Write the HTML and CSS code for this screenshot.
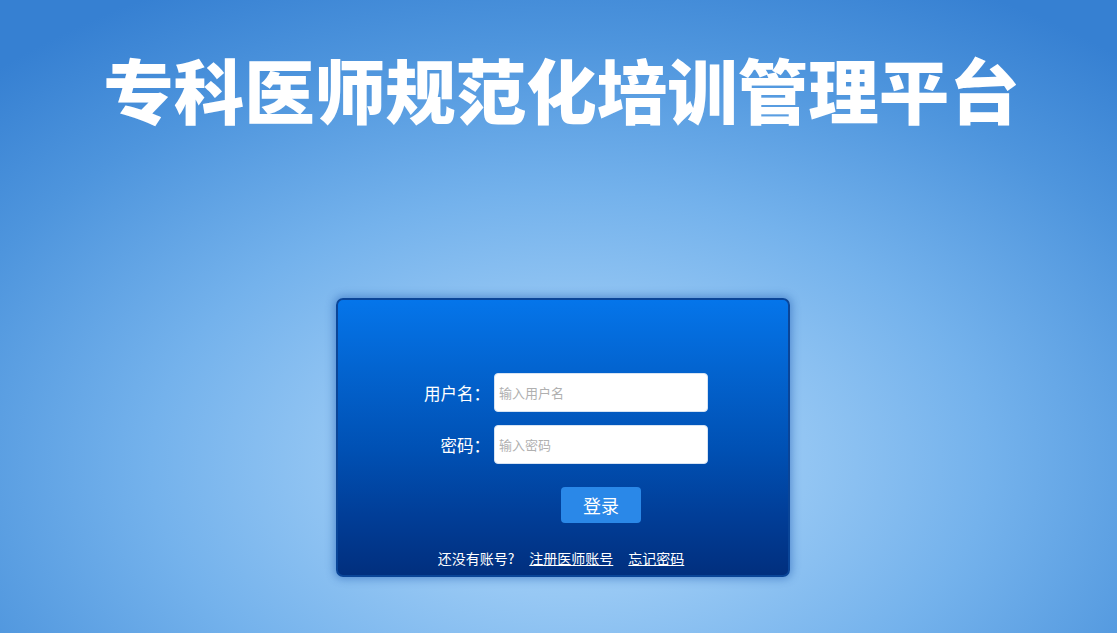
FILE: index.html
```html
<!DOCTYPE html>
<html lang="zh-CN">
<head>
<meta charset="utf-8">
<title>专科医师规范化培训管理平台</title>
<link rel="stylesheet" href="styles.css">
</head>
<body>
<div class="page">
  <h1 class="title">专科医师规范化培训管理平台</h1>
  <div class="card">
    <form class="form">
      <div class="row">
        <label class="label">用户名：</label>
        <input class="input" type="text" placeholder="输入用户名">
      </div>
      <div class="row">
        <label class="label">密码：</label>
        <input class="input" type="password" placeholder="输入密码">
      </div>
      <div class="btn-row">
        <button class="btn" type="button">登录</button>
      </div>
    </form>
    <div class="links">
      <span>还没有账号?</span>
      <a class="link" href="#">注册医师账号</a>
      <a class="link" href="#">忘记密码</a>
    </div>
  </div>
</div>
</body>
</html>
```

FILE: styles.css
```css
html, body {
  margin: 0;
  padding: 0;
  height: 100%;
}
body {
  font-family: "Noto Sans CJK SC", "Noto Sans", sans-serif;
  background: radial-gradient(ellipse 75% 85% at 51% 73%, #acd6f8 0%, #97c8f4 25%, #74b2ec 50%, #4e95dd 78%, #3680d2 100%);
  overflow: hidden;
}
.page {
  height: 633px;
  display: flex;
  flex-direction: column;
  align-items: center;
}
.title {
  margin: 49px 0 0 0;
  font-size: 70.5px;
  line-height: 78px;
  font-weight: 900;
  letter-spacing: 0;
  color: #ffffff;
  padding-left: 6px;
}
.card {
  margin-top: 171px;
  margin-left: 9px;
  width: 450px;
  height: 275px;
  border: 2px solid #0a4598;
  border-radius: 7px;
  background: linear-gradient(to bottom, #0575ea 0%, #0364d0 25%, #0050b3 55%, #013e98 78%, #012f7e 100%);
  box-shadow: 0 0 8px 2px rgba(20, 80, 170, 0.45);
  display: flex;
  flex-direction: column;
}
.form {
  padding-top: 73px;
  display: flex;
  flex-direction: column;
  gap: 13px;
}
.row {
  display: flex;
  align-items: center;
  gap: 4px;
}
.label {
  width: 152px;
  text-align: right;
  color: #ffffff;
  font-size: 16.5px;
  line-height: 20px;
}
.input {
  box-sizing: border-box;
  width: 214px;
  height: 39px;
  margin: 0;
  padding: 0 4px;
  border: 1px solid #d6e3f3;
  border-radius: 4px;
  background: #ffffff;
  font-family: "Noto Sans CJK SC", sans-serif;
  font-size: 13px;
  color: #333;
  outline: none;
}
.input::placeholder {
  color: #b0b0b0;
}
.btn-row {
  padding-top: 10px;
  padding-left: 223px;
}
.btn {
  width: 80px;
  height: 36px;
  border: none;
  border-radius: 4px;
  background: #2a88e8;
  color: #ffffff;
  font-family: "Noto Sans CJK SC", sans-serif;
  font-size: 18px;
  line-height: 36px;
  padding: 0;
}
.links {
  margin-top: 26px;
  margin-right: 4px;
  display: flex;
  justify-content: center;
  gap: 15px;
  color: #ffffff;
  font-size: 14px;
  line-height: 18px;
}
.link {
  color: #ffffff;
  text-decoration: underline;
}
```
